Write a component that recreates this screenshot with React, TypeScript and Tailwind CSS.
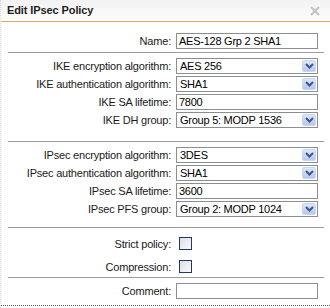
import React from "react";

function Chevron() {
  return (
    <svg width="9" height="6" viewBox="0 0 9 6">
      <path d="M1 1 L4.5 4.5 L8 1" fill="none" stroke="#3f5584" strokeWidth="2" />
    </svg>
  );
}

function Label({ children }: { children: React.ReactNode }) {
  return (
    <div className="w-[170px] shrink-0 text-right text-[11px] leading-[16px] tracking-[-0.2px] text-[#1a1a1a] whitespace-nowrap">
      {children}
    </div>
  );
}

function TextRow({ label, value }: { label: string; value: string }) {
  return (
    <div className="flex items-center h-[16px]">
      <Label>{label}</Label>
      <div className="ml-[5px] w-[142px] h-[16px] border border-[#8a8d92] bg-white pl-[2px] text-[11px] leading-[14px] tracking-[-0.25px] text-black whitespace-nowrap overflow-hidden">
        {value}
      </div>
    </div>
  );
}

function SelectRow({ label, value }: { label: string; value: string }) {
  return (
    <div className="flex items-center h-[16px]">
      <Label>{label}</Label>
      <div className="relative ml-[5px] w-[142px] h-[16px] border border-[#8a8d92] bg-white pl-[3px] text-[11px] leading-[14px] tracking-[-0.25px] text-black whitespace-nowrap">
        {value}
        <div className="absolute right-[1px] top-[1px] w-[14px] h-[12px] rounded-[2px] border border-[#c9d6f2] bg-gradient-to-b from-[#dde7fb] to-[#b5c7ee] flex items-center justify-center">
          <Chevron />
        </div>
      </div>
    </div>
  );
}

function CheckRow({ label, mt }: { label: string; mt: string }) {
  return (
    <div className={`flex items-center h-[13px] ${mt}`}>
      <Label>{label}</Label>
      <div className="ml-[8px] w-[13px] h-[13px] border border-[#1f3a60] bg-gradient-to-br from-[#dcdee3] to-[#fbfbfb]" />
    </div>
  );
}

function Sep({ mt }: { mt: string }) {
  return <div className={`ml-[7px] w-[316px] border-t border-[#9c9c9c] ${mt}`} />;
}

export default function App() {
  return (
    <div className="w-[330px] h-[308px] bg-white font-['Liberation_Sans',Arial,sans-serif] flex flex-col border-l border-dotted border-[#d8d8d8] overflow-hidden">
      <div className="h-[21px] shrink-0 bg-gradient-to-b from-[#f2f2f2] to-[#fdfdfd] flex items-center justify-between pl-[6px] pr-[10px]">
        <span className="text-[11px] font-bold tracking-[-0.1px] text-[#1e1e1e]">Edit IPsec Policy</span>
        <svg width="10" height="10" viewBox="0 0 10 10">
          <path d="M1 1 L9 9 M9 1 L1 9" stroke="#c4c4c4" strokeWidth="2.2" />
        </svg>
      </div>
      <div className="h-[1px] shrink-0 bg-[#f0a256]" />
      <div className="mt-[11px]">
        <TextRow label="Name:" value="AES-128 Grp 2 SHA1" />
      </div>
      <Sep mt="mt-[3px]" />
      <div className="mt-[5px] flex flex-col gap-[2px]">
        <SelectRow label="IKE encryption algorithm:" value="AES 256" />
        <SelectRow label="IKE authentication algorithm:" value="SHA1" />
        <TextRow label="IKE SA lifetime:" value="7800" />
        <SelectRow label="IKE DH group:" value="Group 5: MODP 1536" />
      </div>
      <Sep mt="mt-[13px]" />
      <div className="mt-[5px] flex flex-col gap-[2px]">
        <SelectRow label="IPsec encryption algorithm:" value="3DES" />
        <SelectRow label="IPsec authentication algorithm:" value="SHA1" />
        <TextRow label="IPsec SA lifetime:" value="3600" />
        <SelectRow label="IPsec PFS group:" value="Group 2: MODP 1024" />
      </div>
      <Sep mt="mt-[10px]" />
      <CheckRow label="Strict policy:" mt="mt-[9px]" />
      <CheckRow label="Compression:" mt="mt-[10px]" />
      <Sep mt="mt-[4px]" />
      <div className="mt-[5px]">
        <TextRow label="Comment:" value="" />
      </div>
      <div className="mt-[6px] border-t border-dotted border-[#555]" />
    </div>
  );
}
